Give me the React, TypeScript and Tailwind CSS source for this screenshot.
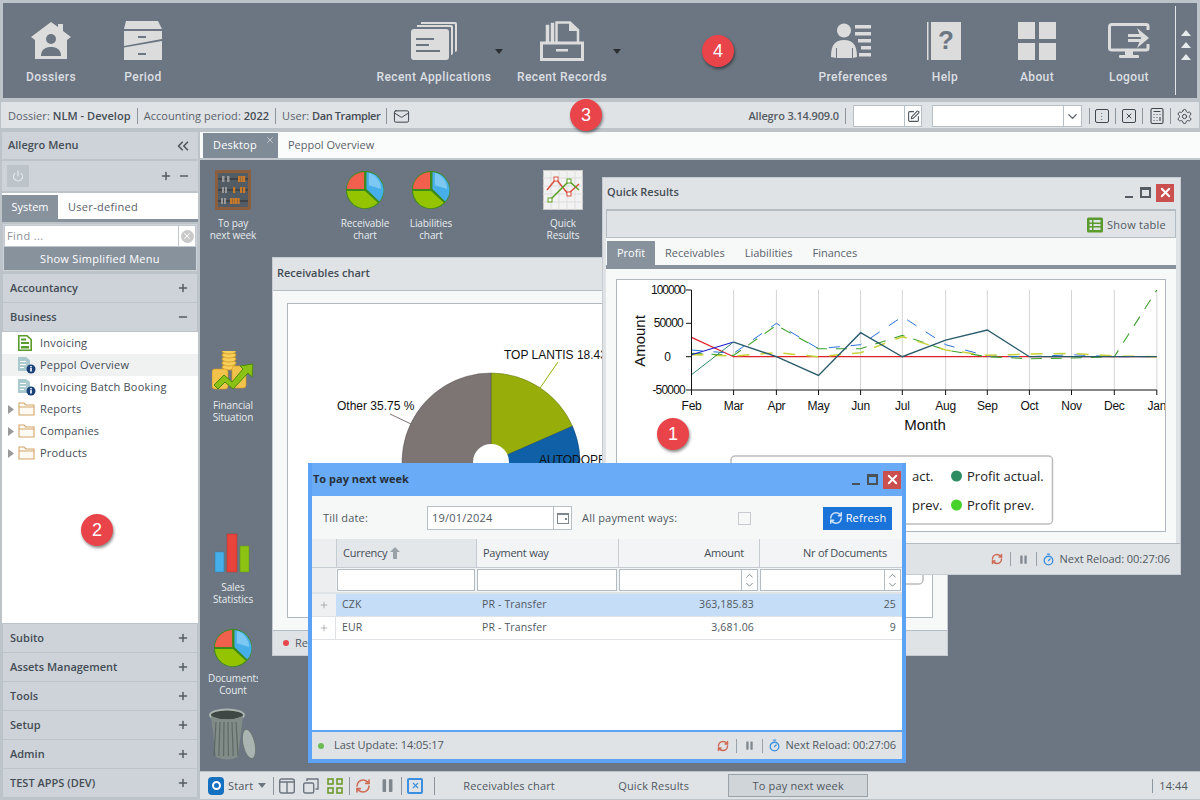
import React from "react";
import { Plus, Minus, ChevronsLeft, Mail, SquarePen, ChevronDown, ChevronUp, Settings, Calculator, X, RefreshCw, Pause, Power, Timer } from "lucide-react";

const G = "#dcdcdc";

function Home() {
  return (
    <svg width="40" height="38" viewBox="0 0 40 38">
      <path d="M0 15 L20 0 L27 5 V2 H32 V9 L40 15 L36 18 V37 H4 V18 Z" fill={G} />
      <circle cx="20" cy="17" r="5" fill="#6b7682" />
      <path d="M10 34 C10 27 15 25 20 25 C25 25 30 27 30 34 Z" fill="#6b7682" />
    </svg>
  );
}
function Cabinet() {
  return (
    <svg width="40" height="40" viewBox="0 0 40 40">
      <path d="M3 0 H35 L39 8 H1 Z" fill={G} />
      <path d="M1 10 H39 V18 L1 25 Z" fill={G} />
      <path d="M1 26.5 L39 20 V39 H1 Z" fill={G} />
      <rect x="15" y="15" width="8" height="2" fill="#6b7682" />
      <rect x="15" y="32" width="8" height="2" fill="#6b7682" />
    </svg>
  );
}
function Apps() {
  return (
    <svg width="46" height="38" viewBox="0 0 46 38">
      <path d="M10 0 H44 Q46 0 46 2 V28 Q46 30 44 30 V3 Q44 2 43 2 H10 Z" fill={G} />
      <path d="M6 3 H40 Q42 3 42 5 V31 Q42 33 40 33 V6 Q40 5 39 5 H6 Z" fill={G} />
      <rect x="0" y="7" width="38" height="31" rx="3" fill={G} />
      <rect x="5" y="16" width="18" height="2" fill="#6b7682" />
      <rect x="5" y="22" width="13" height="2" fill="#6b7682" />
      <rect x="5" y="28" width="24" height="2" fill="#6b7682" />
    </svg>
  );
}
function Records() {
  return (
    <svg width="44" height="40" viewBox="0 0 44 40">
      <path d="M6 22 V4 H9 V22 M11 22 V2 H14 V22" fill={G} stroke={G} strokeWidth="0.5" />
      <path d="M16.5 22 V1.5 H30 L38 9 V22" fill="none" stroke={G} strokeWidth="2.5" />
      <path d="M29 1 V10 H38 Z" fill={G} />
      <path d="M1.5 22 H42.5 V38.5 H1.5 Z" fill="none" stroke={G} strokeWidth="3" />
      <rect x="16" y="28" width="12" height="2.5" fill={G} />
    </svg>
  );
}
function Prefs() {
  return (
    <svg width="44" height="36" viewBox="0 0 44 36">
      <circle cx="13" cy="7.5" r="7" fill={G} />
      <path d="M0 34 C0 22 4 17 13 17 C22 17 26 22 26 34 L22 35 V25 H21 V35 H6 V25 H5 V35 Z" fill={G} />
      <rect x="24" y="2" width="16" height="3.5" fill={G} />
      <rect x="24" y="9" width="16" height="3.5" fill={G} />
      <rect x="27" y="16" width="13" height="3.5" fill={G} />
      <rect x="30" y="23" width="10" height="3.5" fill={G} />
      <rect x="28" y="30" width="12" height="3.5" fill={G} />
    </svg>
  );
}
function Help() {
  return (
    <svg width="36" height="38" viewBox="0 0 36 38">
      <rect x="0" y="0" width="1.5" height="38" fill={G} />
      <rect x="4" y="0" width="30" height="38" fill={G} />
      <text x="19" y="27" textAnchor="middle" fontFamily="Liberation Sans" fontWeight="700" fontSize="26" fill="#6b7682">?</text>
    </svg>
  );
}
function About() {
  return (
    <svg width="38" height="38" viewBox="0 0 38 38">
      <rect x="0" y="0" width="17" height="17" fill={G} />
      <rect x="21" y="0" width="17" height="17" fill={G} />
      <rect x="0" y="21" width="17" height="17" fill={G} />
      <rect x="21" y="21" width="17" height="17" fill={G} />
    </svg>
  );
}
function Logout() {
  return (
    <svg width="42" height="36" viewBox="0 0 42 36">
      <path d="M40 7 V3 Q40 1.5 38 1.5 H4 Q1.5 1.5 1.5 4 V25 Q1.5 27 4 27 H38 Q40 27 40 25 V21" fill="none" stroke={G} strokeWidth="3" />
      <rect x="17" y="27" width="8" height="6" fill={G} />
      <rect x="11" y="32" width="20" height="3" rx="1" fill={G} />
      <rect x="20" y="11" width="14" height="3" fill={G} />
      <rect x="20" y="16" width="14" height="3" fill={G} />
      <path d="M29 5 L41 15 L29 25 L33 15 Z" fill={G} />
    </svg>
  );
}

function PieIcon() {
  return (
    <svg width="40" height="40" viewBox="0 0 42 42">
      <circle cx="21" cy="21" r="20" fill="#3c8a1a" />
      <path d="M20 20 V2 A18.5 18.5 0 0 0 2 20 Z" fill="#f0604c" />
      <path d="M22.5 2 A19 19 0 0 1 36 33 L22.5 20 Z" fill="#46aee8" />
      <path d="M25 3 A18 18 0 0 1 38 20 L25 16 Z" fill="#7cc8f2" />
      <path d="M2 22 H21 L34.5 34.5 A19 19 0 0 1 2 22 Z" fill="#94c400" />
    </svg>
  );
}
function Abacus() {
  const rows = [9, 20, 31];
  return (
    <svg width="36" height="40" viewBox="0 0 36 40">
      <rect x="1.5" y="1.5" width="33" height="37" fill="#525c64" stroke="#8a5f3f" strokeWidth="3" />
      {rows.map((y) => (
        <rect key={y} x="3" y={y - 0.5} width="30" height="1" fill="#2d2d2d" />
      ))}
      {[7, 12].map((x) => <rect key={x} x={x} y="6" width="2.5" height="6" fill="#999" />)}
      {[7, 10].map((x) => <rect key={x} x={x} y="17" width="2" height="6" fill="#999" />)}
      {[23, 25.5, 28].map((x) => <rect key={x} x={x} y="6" width="2.2" height="6" fill="#c87a2a" />)}
      {[18, 25, 28].map((x) => <rect key={x} x={x} y="17" width="2.2" height="6" fill="#c87a2a" />)}
      {[15, 17.5, 20, 22.5].map((x) => <rect key={x} x={x} y="28" width="2.2" height="6" fill="#c87a2a" />)}
      {[6, 9].map((x) => <rect key={x} x={x} y="28" width="2" height="6" fill="#999" />)}
    </svg>
  );
}
function QuickIcon() {
  return (
    <svg width="40" height="40" viewBox="0 0 40 40">
      <rect x="0.5" y="0.5" width="39" height="39" fill="#f2f2f2" stroke="#c8c8c8" />
      <path d="M8 0 V40 M16 0 V40 M24 0 V40 M32 0 V40 M0 8 H40 M0 16 H40 M0 24 H40 M0 32 H40" stroke="#ddd" />
      <path d="M4 20 L13 9 L25 24 L36 14" fill="none" stroke="#d94f3f" strokeWidth="1.5" />
      <path d="M6 31 L26 11 L36 20" fill="none" stroke="#5aa020" strokeWidth="1.5" />
      <rect x="11" y="7" width="4" height="4" fill="#fff" stroke="#d94f3f" />
      <rect x="24" y="22" width="4" height="4" fill="#fff" stroke="#d94f3f" />
      <rect x="24" y="9" width="4" height="4" fill="#fff" stroke="#5aa020" />
      <rect x="5" y="28" width="4" height="4" fill="#fff" stroke="#5aa020" />
    </svg>
  );
}
function Finance() {
  return (
    <svg width="42" height="40" viewBox="0 0 42 40">
      {[0, 4, 8, 12, 16].map((d) => (
        <ellipse key={d} cx="17" cy={16 - d} rx="7" ry="3" fill="#f6cf5a" stroke="#d89a20" strokeWidth="0.8" />
      ))}
      <rect x="0" y="18" width="16" height="20" rx="3" fill="#f3c24b" stroke="#d89a20" strokeWidth="0.6" />
      <rect x="20" y="15" width="14" height="22" rx="3" fill="#f3c24b" stroke="#d89a20" strokeWidth="0.6" />
      <path d="M2 34 L12 24 L20 31 L31 18 L28 15 L41 13 L40 26 L36 22 L21 38 L13 31 L6 38 Z" fill="#8cc214" stroke="#4b8a10" strokeWidth="1" />
    </svg>
  );
}
function Bars() {
  return (
    <svg width="40" height="40" viewBox="0 0 40 40">
      <rect x="2" y="19" width="9" height="20" fill="#46aee8" stroke="#2d7fb0" strokeWidth="0.5" />
      <rect x="14" y="1" width="10" height="38" fill="#e8443c" stroke="#b03028" strokeWidth="0.5" />
      <rect x="27" y="13" width="9" height="26" fill="#8cc214" stroke="#5e9010" strokeWidth="0.5" />
    </svg>
  );
}
function Trash() {
  return (
    <svg width="50" height="54" viewBox="0 0 50 54">
      <ellipse cx="19" cy="7" rx="17" ry="5.5" fill="#3e4744" stroke="#aab4b0" strokeWidth="2" />
      <path d="M3 8 L8 49 Q19 54 30 49 L35 8 Q19 15 3 8 Z" fill="#818c88" />
      {[8, 12, 16, 20, 24, 28].map((x) => (
        <path key={x} d={`M${x} 14 L${x + (x - 18) * 0.2} 48`} stroke="#5e6864" strokeWidth="1.2" />
      ))}
      <ellipse cx="41" cy="36" rx="6" ry="15" transform="rotate(-12 41 36)" fill="#aab4b0" stroke="#6a7470" />
    </svg>
  );
}

function Folder() {
  return (
    <svg width="17" height="14" viewBox="0 0 17 14">
      <path d="M1 13 V1 H6 L8 3 H16 V13 Z M1 5 H16" fill="#fdfaf4" stroke="#d3a468" strokeWidth="1.1" />
    </svg>
  );
}
function DocGreen() {
  return (
    <svg width="14" height="16" viewBox="0 0 14 16">
      <path d="M0.8 0.8 H9 L13.2 4.5 V15.2 H0.8 Z" fill="#fff" stroke="#5b9a2c" strokeWidth="1.6" />
      <rect x="3" y="3.5" width="5" height="2" fill="#5b9a2c" />
      <rect x="3" y="7" width="8" height="2" fill="#5b9a2c" />
      <rect x="3" y="11" width="8" height="2.5" fill="#5b9a2c" />
    </svg>
  );
}
function DocInfo() {
  return (
    <svg width="18" height="18" viewBox="0 0 18 18">
      <path d="M0 1 H8 L12 4 V15 H0 Z" fill="#a9c9cf" />
      <rect x="2" y="5" width="6" height="1" fill="#fff" />
      <rect x="2" y="8" width="6" height="1" fill="#fff" />
      <rect x="2" y="11" width="4" height="1" fill="#fff" />
      <circle cx="13" cy="13" r="4.5" fill="#1a4279" />
      <rect x="12.2" y="12" width="1.6" height="3.5" fill="#fff" />
      <rect x="12.2" y="10" width="1.6" height="1.4" fill="#fff" />
    </svg>
  );
}
function Caret({ color = "#2b2f33" }: { color?: string }) {
  return (
    <svg width="8" height="5" viewBox="0 0 8 5">
      <path d="M0 0 H8 L4 5 Z" fill={color} />
    </svg>
  );
}
function Badge({ n, x, y }: { n: number; x: number; y: number }) {
  return (
    <div
      className="absolute w-8 h-8 rounded-full bg-[#e8444a] text-white text-[18px] flex items-center justify-center shadow-[1px_2px_3px_rgba(0,0,0,0.45)] font-['Liberation_Sans',sans-serif]"
      style={{ left: x - 16, top: y - 16 }}
    >
      {n}
    </div>
  );
}
function RibbonBtn({ label, w = "w-[92px]", children }: { label: string; w?: string; children: React.ReactNode }) {
  return (
    <div className={`${w} h-full flex flex-col items-center text-[#dcdfe2]`}>
      <div className="h-[40px] mt-[18px] flex items-center justify-center">{children}</div>
      <div className="mt-[7px] text-[12px] font-['Roboto',sans-serif] font-medium tracking-[0.4px] whitespace-nowrap">{label}</div>
    </div>
  );
}
function Sep({ h = "h-[16px]" }: { h?: string }) {
  return <div className={`${h} w-px bg-[#8d969e]`} />;
}
function SideHead({ label, minus = false }: { label: string; minus?: boolean }) {
  return (
    <div className="mx-px h-[28px] mb-px bg-[#cdd3d8] flex items-center justify-between pl-[7px] pr-[8px] text-[11px] font-semibold text-[#444c55]">
      <span>{label}</span>
      {minus ? <Minus size={12} strokeWidth={3} color="#545c64" /> : <Plus size={12} strokeWidth={3} color="#545c64" />}
    </div>
  );
}
function MenuItem({ icon, label, active = false, arrow = false }: { icon: React.ReactNode; label: string; active?: boolean; arrow?: boolean }) {
  return (
    <div className={`h-[22px] flex items-center text-[11px] tracking-[0.2px] text-[#444c55] ${active ? "bg-[#f0f2f2]" : ""}`}>
      <div className="w-[6px]" />
      <div className="w-[10px]">
        {arrow && (
          <svg width="6" height="9" viewBox="0 0 6 9"><path d="M0 0 L6 4.5 L0 9 Z" fill="#9a9a9a" /></svg>
        )}
      </div>
      <div className="w-[22px] flex justify-start">{icon}</div>
      <span>{label}</span>
    </div>
  );
}
function WinControls({ dark = false }: { dark?: boolean }) {
  const c = dark ? "#4a5058" : "#555c63";
  return (
    <div className="flex items-center gap-[4px]">
      <div className="w-[9px] h-[10px] flex items-end mr-[2px]">
        <div className="w-[8px] h-[2px]" style={{ background: c }} />
      </div>
      <div className="w-[11px] h-[11px] border-2 border-t-[3px]" style={{ borderColor: c }} />
      <div className="w-[18px] h-[18px] bg-[#c9504f] flex items-center justify-center ml-[1px]">
        <X size={15} strokeWidth={3} color="#fff" />
      </div>
    </div>
  );
}
function FooterRight() {
  return (
    <div className="flex items-center text-[11px] text-[#50585f] tracking-[-0.05px]">
      <RefreshCw size={12} strokeWidth={3} color="#cf6a55" />
      <div className="w-px h-[14px] bg-[#9aa2a9] ml-[7px] mr-[7px]" />
      <Pause size={11} strokeWidth={0} fill="#7f878e" />
      <div className="w-px h-[14px] bg-[#9aa2a9] ml-[7px] mr-[5px]" />
      <Timer size={13} strokeWidth={2.4} color="#3a8fe0" />
      <span className="ml-[5px]">Next Reload: 00:27:06</span>
    </div>
  );
}
function DeskIcon({ x, y, w = 56, gap = "mt-[6px]", label, children }: { x: number; y: number; w?: number; gap?: string; label: string[]; children: React.ReactNode }) {
  return (
    <div className="absolute flex flex-col items-center" style={{ left: x - w / 2, top: y, width: w }}>
      <div className="h-[44px] flex items-center justify-center">{children}</div>
      <div className={`${gap} text-[10px] leading-[12px] text-[#e8ebee] text-center overflow-hidden w-full whitespace-nowrap tracking-[-0.1px]`}>
        {label.map((l) => <div key={l}>{l}</div>)}
      </div>
    </div>
  );
}

const xs = [691.5, 733.6, 776.4, 818.5, 860.6, 902.3, 945.6, 987.3, 1029.4, 1071.5, 1114.3, 1156.8];
const months = ["Feb", "Mar", "Apr", "May", "Jun", "Jul", "Aug", "Sep", "Oct", "Nov", "Dec", "Jan"];
const yy = (v: number) => 356.7 - (v * 66.7) / 100000;
const line = (vals: number[]) => vals.map((v, i) => `${xs[i]},${yy(v)}`).join(" ");

function QuickChart() {
  return (
    <svg className="absolute inset-0" width="548" height="251" viewBox="617 280 548 251" fontFamily="'Liberation Sans', sans-serif">
      {xs.slice(1).map((x) => <line key={x} x1={x} y1="290" x2={x} y2="390" stroke="#d4d4d4" />)}
      <polyline points={line([29000, 0, 0, 0, 0, 0, 0, 0, 0, 0, 0, 0])} fill="none" stroke="#e01f26" strokeWidth="1.2" />
      <polyline points={line([10000, 5000, 50000, 12000, 18000, 60000, 18000, 1000, 0, 3000, 0, 0])} fill="none" stroke="#2a72d8" strokeWidth="1" strokeDasharray="11 11" />
      <polyline points={line([5000, 2000, 47000, 12000, 12000, 32000, 10000, 0, -3000, -2000, 0, 100000])} fill="none" stroke="#3da12c" strokeWidth="1.1" strokeDasharray="11 9" />
      <polyline points={line([3000, 1000, 6000, 0, 6000, 30000, 10000, 2000, 4000, 5000, 1000, 0])} fill="none" stroke="#c8d23a" strokeWidth="1.5" strokeDasharray="12 11" />
      <polyline points={line([3000, 22000])} fill="none" stroke="#1e22d0" strokeWidth="1.1" />
      <polyline points={line([-27000, 22000])} fill="none" stroke="#2f8a62" strokeWidth="1" />
      <polyline points={line([22000, 22000, 0, -28000, 36000, 0, 25000, 40000, 0, 0, 0, 0]).split(" ").slice(1).join(" ")} fill="none" stroke="#295a6c" strokeWidth="1.3" />
      <line x1="691.5" y1="290" x2="691.5" y2="390" stroke="#111" />
      <line x1="691.5" y1="390" x2="1156.8" y2="390" stroke="#111" />
      {[290, 323.3, 356.7, 390].map((y) => <line key={y} x1="686" y1={y} x2="691.5" y2={y} stroke="#111" />)}
      {xs.map((x) => <line key={x} x1={x} y1="390" x2={x} y2="395" stroke="#111" />)}
      <text x="685" y="294" textAnchor="end" fontSize="12" letterSpacing="-1" fill="#111">100000</text>
      <text x="683" y="327" textAnchor="end" fontSize="12" letterSpacing="-0.8" fill="#111">50000</text>
      <text x="671" y="361" textAnchor="end" fontSize="12" fill="#111">0</text>
      <text x="685" y="394" textAnchor="end" fontSize="12" letterSpacing="-0.8" fill="#111">-50000</text>
      {xs.map((x, i) => <text key={x} x={x} y="410" textAnchor="middle" fontSize="12" letterSpacing="-0.3" fill="#111">{months[i]}</text>)}
      <text x="925" y="430" textAnchor="middle" fontSize="15" fill="#111">Month</text>
      <text transform="translate(645 341) rotate(-90)" textAnchor="middle" fontSize="15" fill="#111">Amount</text>
      <rect x="731" y="456" width="321.5" height="68" rx="4" fill="#fff" stroke="#bcbcbc" strokeWidth="1.5" />
      <g fontFamily="'Open Sans', sans-serif" fontSize="13" fill="#222">
        <text x="912" y="481">act.</text>
        <text x="912" y="510">prev.</text>
        <circle cx="956.5" cy="476" r="5.5" fill="#2e8b62" />
        <circle cx="956.5" cy="505" r="5.5" fill="#46d22a" />
        <text x="967" y="481">Profit actual.</text>
        <text x="967" y="510">Profit prev.</text>
      </g>
    </svg>
  );
}

function slice(cx: number, cy: number, r: number, a0: number, a1: number) {
  const p = (a: number) => [cx + r * Math.sin((a * Math.PI) / 180), cy - r * Math.cos((a * Math.PI) / 180)];
  const [x0, y0] = p(a0);
  const [x1, y1] = p(a1);
  return `M${cx} ${cy} L${x0} ${y0} A${r} ${r} 0 ${a1 - a0 > 180 ? 1 : 0} 1 ${x1} ${y1} Z`;
}
function PieChart() {
  return (
    <svg className="absolute inset-0" width="643" height="315" viewBox="288 303 643 315" fontFamily="'Liberation Sans', sans-serif" fontSize="12" fill="#111">
      <path d={slice(491, 461, 89, 0, 66.3)} fill="#96ad0a" stroke="#5a6a10" strokeWidth="0.5" />
      <path d={slice(491, 461, 89, 66.3, 130)} fill="#1060a8" stroke="#0a3f70" strokeWidth="0.5" />
      <path d={slice(491, 461, 89, 231.3, 360)} fill="#7d7474" stroke="#5a5454" strokeWidth="0.5" />
      <circle cx="491" cy="461" r="18" fill="#fff" />
      <line x1="558" y1="361" x2="540" y2="387" stroke="#96ad0a" />
      <line x1="390" y1="413" x2="411" y2="423" stroke="#7d7474" />
      <text x="504" y="358">TOP LANTIS 18.43 %</text>
      <text x="337" y="409">Other 35.75 %</text>
      <text x="539" y="463">AUTODOPRAVA</text>
      <rect x="700" y="420" width="223" height="163" rx="4" fill="#fff" stroke="#bcbcbc" strokeWidth="1.5" />
    </svg>
  );
}

function GridCell({ className = "", children }: { className?: string; children?: React.ReactNode }) {
  return <div className={`h-full flex items-center ${className}`}>{children}</div>;
}
function NumFilter() {
  return (
    <div className="h-[22px] bg-white border border-[#b3bbc3] flex items-stretch justify-end">
      <div className="w-[16px] border-l border-[#b3bbc3] flex flex-col items-center justify-center -space-y-[3px]">
        <ChevronUp size={13} strokeWidth={2} color="#7f878e" />
        <ChevronDown size={13} strokeWidth={2} color="#7f878e" />
      </div>
    </div>
  );
}

export default function App() {
  return (
    <div className="relative w-[1200px] h-[800px] overflow-hidden bg-[#bcc4ca] font-['Open_Sans',sans-serif] flex flex-col">
      {/* Ribbon */}
      <div className="mx-[3px] mt-[3px] h-[95px] bg-[#6b7682] flex items-stretch pl-[2px]">
        <RibbonBtn label="Dossiers"><Home /></RibbonBtn>
        <RibbonBtn label="Period"><Cabinet /></RibbonBtn>
        <div className="w-[181px]" />
        <div className="relative flex">
          <RibbonBtn label="Recent Applications" w="w-[128px]"><Apps /></RibbonBtn>
          <div className="absolute left-[125px] top-[46px]"><Caret /></div>
        </div>
        <div className="relative flex">
          <RibbonBtn label="Recent Records" w="w-[128px]"><Records /></RibbonBtn>
          <div className="absolute left-[115px] top-[46px]"><Caret /></div>
        </div>
        <div className="flex-1" />
        <RibbonBtn label="Preferences"><Prefs /></RibbonBtn>
        <RibbonBtn label="Help"><Help /></RibbonBtn>
        <RibbonBtn label="About"><About /></RibbonBtn>
        <RibbonBtn label="Logout"><Logout /></RibbonBtn>
        <div className="w-[22px] my-[3px] border-l border-[#e4e7ea] flex flex-col items-center justify-center gap-[6px] pb-[12px] pr-[2px]">
          {[0, 1, 2].map((i) => (
            <svg key={i} width="10" height="6" viewBox="0 0 10 6"><path d="M0 6 L5 0 L10 6 Z" fill="#e8eaec" /></svg>
          ))}
        </div>
      </div>

      {/* Status bar */}
      <div className="mt-[4px] h-[26px] mx-[1px] bg-[#dfe3e6] flex items-center pl-[7px] pr-[6px] pt-[2px] text-[11px] text-[#5a6169] tracking-[0.05px]">
        <span>Dossier: <b className="font-semibold text-[#454c54]">NLM - Develop</b></span>
        <div className="mx-[6px]"><Sep /></div>
        <span>Accounting period: <b className="font-semibold text-[#454c54]">2022</b></span>
        <div className="mx-[6px]"><Sep /></div>
        <span>User: <b className="font-semibold text-[#454c54] tracking-[-0.4px]">Dan Trampler</b></span>
        <div className="mx-[6px]"><Sep /></div>
        <Mail size={17} strokeWidth={1.4} color="#3d444b" />
        <div className="flex-1" />
        <span className="font-semibold text-[#555b62] tracking-[-0.15px]">Allegro 3.14.909.0</span>
        <div className="ml-[6px] mr-[7px]"><Sep /></div>
        <div className="w-[69px] h-[22px] bg-white border border-[#b6bec6] flex justify-end">
          <div className="w-[17px] border-l border-[#b6bec6] flex items-center justify-center">
            <SquarePen size={13} strokeWidth={2} color="#4d555c" />
          </div>
        </div>
        <div className="ml-[10px] w-[150px] h-[22px] bg-white border border-[#b6bec6] flex justify-end">
          <div className="w-[18px] border-l border-[#b6bec6] flex items-center justify-center">
            <ChevronDown size={15} strokeWidth={2.2} color="#5a6169" />
          </div>
        </div>
        <div className="ml-[7px] mr-[5px]"><Sep /></div>
        <div className="w-[14px] h-[14px] border border-[#40484f] rounded-[2px] flex items-center justify-center text-[9px] leading-none">⋮</div>
        <div className="ml-[6px] mr-[6px]"><Sep /></div>
        <div className="w-[14px] h-[14px] border border-[#40484f] rounded-[2px] flex items-center justify-center"><X size={8} strokeWidth={3} color="#40484f" /></div>
        <div className="ml-[6px] mr-[5px]"><Sep /></div>
        <Calculator size={18} strokeWidth={1.5} color="#40484f" />
        <div className="ml-[4px] mr-[5px]"><Sep /></div>
        <Settings size={17} strokeWidth={1.4} color="#40484f" />
      </div>

      {/* Main */}
      <div className="mt-[4px] flex-1 flex min-h-0">
        {/* Sidebar */}
        <div className="ml-[2px] w-[196px] flex flex-col">
          <div className="h-[27px] bg-[#cdd3d8] flex items-center justify-between pl-[6px] pr-[6px] text-[11px] font-semibold text-[#444c55]">
            <span>Allegro Menu</span>
            <ChevronsLeft size={18} strokeWidth={2.2} color="#4f565e" />
          </div>
          <div className="mt-[2px] h-[30px] bg-[#cdd3d8] flex items-center justify-between pl-[5px] pr-[8px]">
            <div className="w-[22px] h-[22px] bg-[#bcc4ca] flex items-center justify-center">
              <Power size={12} strokeWidth={2.4} color="#e6e9ec" />
            </div>
            <div className="flex gap-[6px]">
              <Plus size={12} strokeWidth={3} color="#545c64" />
              <Minus size={12} strokeWidth={3} color="#545c64" />
            </div>
          </div>
          <div className="mt-[2px] h-[26px] pt-[2px] bg-white flex items-stretch text-[11px] tracking-[0.3px]">
            <div className="w-[56px] bg-[#87929d] text-white flex items-center justify-center tracking-[0px]">System</div>
            <div className="flex items-center pl-[10px] text-[#5a6169]">User-defined</div>
          </div>
          <div className="h-[3px] bg-[#87929d]" />
          <div className="mx-px mt-[2px] border border-[#cdd3d8] bg-[#eef0f1]">
            <div className="flex h-[22px] bg-white items-center border border-[#c0c7cd]">
              <span className="flex-1 pl-[2px] text-[11px] text-[#8a9198] tracking-[0.4px]">Find ...</span>
              <div className="w-[17px] h-full border-l border-[#c0c7cd] flex items-center justify-center bg-white">
                <div className="w-[13px] h-[13px] rounded-full bg-[#c9c9c9] flex items-center justify-center">
                  <X size={10} strokeWidth={2.4} color="#fff" />
                </div>
              </div>
            </div>
            <div className="h-[23px] pt-px bg-[#87929d] text-white text-[11px] flex items-center justify-center tracking-[0.3px]">Show Simplified Menu</div>
          </div>
          <div className="mt-[3px]" />
          <SideHead label="Accountancy" />
          <SideHead label="Business" minus />
          <div className="flex-1 bg-white">
            <MenuItem icon={<DocGreen />} label="Invoicing" />
            <MenuItem icon={<DocInfo />} label="Peppol Overview" active />
            <MenuItem icon={<DocInfo />} label="Invoicing Batch Booking" />
            <MenuItem arrow icon={<Folder />} label="Reports" />
            <MenuItem arrow icon={<Folder />} label="Companies" />
            <MenuItem arrow icon={<Folder />} label="Products" />
          </div>
          <div className="mt-px" />
          <SideHead label="Subito" />
          <SideHead label="Assets Management" />
          <SideHead label="Tools" />
          <SideHead label="Setup" />
          <SideHead label="Admin" />
          <SideHead label="TEST APPS (DEV)" />
          <div className="h-[2px]" />
        </div>

        {/* Content */}
        <div className="ml-[2px] flex-1 flex flex-col min-w-0">
          <div className="h-[26px] bg-[#fafcfc] flex items-stretch pl-[3px] pt-px text-[11px]">
            <div className="relative w-[75px] bg-[#7f8b97] text-white flex items-center pl-[10px] tracking-[0.2px]">
              Desktop
              <X size={10} strokeWidth={1.5} color="#e6e9ec" className="absolute right-[3px] top-[2px]" />
            </div>
            <div className="flex items-center pl-[10px] text-[#5a6169]">Peppol Overview</div>
          </div>
          <div className="h-[2px] bg-[#c2c9ce]" />
          <div className="relative flex-1 bg-[#6b7682]">
            <DeskIcon x={33} y={8} gap="mt-[5px]" label={["To pay", "next week"]}><Abacus /></DeskIcon>
            <DeskIcon x={165} y={8} w={50} gap="mt-[5px]" label={["Receivable", "chart"]}><PieIcon /></DeskIcon>
            <DeskIcon x={231} y={8} w={50} gap="mt-[5px]" label={["Liabilities", "chart"]}><PieIcon /></DeskIcon>
            <DeskIcon x={363} y={8} gap="mt-[5px]" label={["Quick", "Results"]}><QuickIcon /></DeskIcon>
            <DeskIcon x={33} y={189} label={["Financial", "Situation"]}><Finance /></DeskIcon>
            <DeskIcon x={33} y={371} label={["Sales", "Statistics"]}><Bars /></DeskIcon>
            <DeskIcon x={33} y={466} w={50} gap="mt-[2px]" label={["Documents", "Count"]}><PieIcon /></DeskIcon>
            <div className="absolute left-[8px] top-[548px]"><Trash /></div>

            {/* Receivables chart window */}
            <div className="absolute left-[72px] top-[97px] w-[676px] h-[399px] bg-[#dfe3e6] border border-[#c6ccd2] flex flex-col">
              <div className="h-[32px] pb-[1px] flex items-center pl-[4px] text-[11px] font-semibold text-[#444c55]">Receivables chart</div>
              <div className="flex-1 bg-[#f7f9f9] border-t border-b border-[#b4bcc4] px-[14px] pt-[12px] pb-[12px]">
                <div className="relative h-full bg-white border border-[#b0b8bf]"><PieChart /></div>
              </div>
              <div className="h-[24px] flex items-center pl-[10px] text-[11px] text-[#50585f]">
                <div className="w-[6px] h-[6px] rounded-full bg-[#e5474d] mr-[6px]" />
                Re
              </div>
            </div>

            {/* Quick Results window */}
            <div className="absolute left-[402px] top-[17px] w-[579px] h-[398px] bg-[#dfe3e6] border border-[#c6ccd2] flex flex-col">
              <div className="h-[31px] pb-[2px] flex items-center justify-between pl-[4px] pr-[6px] text-[11px] font-semibold text-[#444c55]">
                Quick Results
                <WinControls />
              </div>
              <div className="ml-[3px] mr-[4px] h-[29px] pt-[2px] border border-[#b4bcc4] border-t-2 flex items-center justify-end pr-[9px] text-[11px] text-[#50585f] tracking-[0.25px]">
                <svg className="mr-[4px]" width="16" height="16" viewBox="0 0 16 16">
                  <rect x="0" y="0.5" width="16" height="15" rx="1.5" fill="#5b9a2c" />
                  <path d="M2.5 3 H5 V5.5 H2.5 Z M2.5 7 H5 V9 H2.5 Z M2.5 10.5 H5 V13 H2.5 Z M6.5 3 H13.5 V5.5 H6.5 Z M6.5 7 H13.5 V9 H6.5 Z M6.5 10.5 H13.5 V13 H6.5 Z" fill="#dfe3e6" />
                </svg>
                Show table
              </div>
              <div className="ml-[3px] mr-[4px] flex-1 bg-[#f7f9f9] flex flex-col pt-[3px]">
                <div className="h-[28px] border-b-[4px] border-[#87929d] flex items-stretch text-[11px] text-[#5a6169]">
                  <div className="ml-px w-[48px] pt-px bg-[#87929d] text-white flex items-center justify-center">Profit</div>
                  <div className="ml-[10px] pt-px flex items-center">Receivables</div>
                  <div className="ml-[20px] pt-px flex items-center">Liabilities</div>
                  <div className="ml-[20px] pt-px flex items-center">Finances</div>
                </div>
                <div className="flex-1 px-[10px] pt-[10px] pb-[11px]">
                  <div className="relative h-full bg-white border border-[#b0b8bf]"><QuickChart /></div>
                </div>
              </div>
              <div className="h-[31px] flex items-center justify-end pr-[10px] border-t border-[#b4bcc4]">
                <FooterRight />
              </div>
            </div>

            {/* To pay next week window */}
            <div className="absolute left-[108px] top-[303px] w-[598px] h-[300px] bg-[#6aabf7] border-x-[4px] border-b-[4px] border-[#5da3f5] flex flex-col">
              <div className="h-[33px] bg-[#6aabf7] flex items-center justify-between pl-px pr-[1px] text-[11px] font-bold text-[#26303a]">
                To pay next week
                <WinControls dark />
              </div>
              <div className="h-[43px] pt-px bg-[#f6f8f8] flex items-center pl-[11px] text-[11px] text-[#50585f] tracking-[0.2px]">
                <span className="w-[104px]">Till date:</span>
                <div className="w-[145px] h-[24px] bg-white border border-[#b6bec6] flex items-center justify-between pl-[4px]">
                  19/01/2024
                  <div className="w-[18px] h-full border-l border-[#b6bec6] flex items-center justify-center">
                    <div className="w-[12px] h-[11px] border border-[#7f878e] border-t-2 flex items-center justify-end pr-px"><div className="w-[2px] h-[2px] bg-[#7f878e]" /></div>
                  </div>
                </div>
                <span className="ml-[10px] w-[156px]">All payment ways:</span>
                <div className="w-[13px] h-[13px] border border-[#c6ccd2] bg-[#f6f8f8]" />
                <div className="ml-[72px] w-[69px] h-[23px] bg-[#1a73d8] text-white flex items-center justify-center gap-[3px]">
                  <RefreshCw size={14} strokeWidth={2.6} color="#cfe2f7" />
                  <span>Refresh</span>
                </div>
              </div>
              <div className="grid grid-cols-[24px_140px_142px_141px_143px] h-[28px] bg-[#f2f4f5] text-[11px] text-[#444c55] tracking-[-0.25px]">
                <GridCell className="bg-[#eceef0]" />
                <GridCell className="pl-[6px] bg-[#e4e7ea] border-l border-[#c6ccd2] gap-[3px]">
                  Currency
                  <svg width="10" height="12" viewBox="0 0 10 12"><path d="M5 0 L10 5 H7 V12 H3 V5 H0 Z" fill="#9aa2a9" /></svg>
                </GridCell>
                <GridCell className="pl-[6px] border-l border-[#c6ccd2]">Payment way</GridCell>
                <GridCell className="justify-end pr-[15px] border-l border-[#c6ccd2]">Amount</GridCell>
                <GridCell className="justify-end pr-[15px] border-l border-[#c6ccd2]">Nr of Documents</GridCell>
              </div>
              <div className="grid grid-cols-[24px_140px_142px_141px_143px] h-[25px] bg-[#f2f4f5] border-t border-[#c6ccd2] items-center">
                <div className="h-full bg-[#eceef0]" />
                <div className="h-[22px] mx-px bg-white border border-[#b3bbc3]" />
                <div className="h-[22px] mx-px bg-white border border-[#b3bbc3]" />
                <div className="mx-px"><NumFilter /></div>
                <div className="mx-px"><NumFilter /></div>
              </div>
              <div className="h-[2px] bg-[#dfe3e6]" />
              <div className="flex-1 bg-white flex flex-col text-[10.5px] text-[#50585f] tracking-[0.15px]">
                <div className="grid grid-cols-[24px_140px_142px_141px_143px] h-[23px] bg-[#c6ddf8] items-center border-b border-[#dfe3e6]">
                  <GridCell className="justify-center bg-[#eef0f1]"><Plus size={10} strokeWidth={1.2} color="#777" /></GridCell>
                  <GridCell className="pl-[6px]">CZK</GridCell>
                  <GridCell className="pl-[6px]">PR - Transfer</GridCell>
                  <GridCell className="justify-end pr-[5px]">363,185.83</GridCell>
                  <GridCell className="justify-end pr-[6px]">25</GridCell>
                </div>
                <div className="grid grid-cols-[24px_140px_142px_141px_143px] h-[23px] items-center border-b border-[#dfe3e6]">
                  <GridCell className="justify-center border-r border-[#dfe3e6]"><Plus size={10} strokeWidth={1.2} color="#777" /></GridCell>
                  <GridCell className="pl-[6px]">EUR</GridCell>
                  <GridCell className="pl-[6px]">PR - Transfer</GridCell>
                  <GridCell className="justify-end pr-[5px]">3,681.06</GridCell>
                  <GridCell className="justify-end pr-[6px]">9</GridCell>
                </div>
                <div className="flex-1" />
                <div className="h-[2px] bg-[#5da3f5]" />
                <div className="h-[27px] bg-[#dfe3e6] flex items-center justify-between pl-[6px] pr-[6px] text-[11px]">
                  <div className="flex items-center tracking-[-0.05px]">
                    <div className="w-[6px] h-[6px] rounded-full bg-[#6dbb55] mr-[10px]" />
                    Last Update: 14:05:17
                  </div>
                  <FooterRight />
                </div>
              </div>
            </div>
          </div>
          <div className="h-[1px] bg-[#bcc4ca]" />
          {/* Taskbar */}
          <div className="h-[27px] mb-[1px] bg-[#dfe3e6] flex items-center pl-[8px] pr-[12px] text-[11px] text-[#50585f] tracking-[0.15px]">
            <div className="w-[16px] h-[18px] rounded-[4px] bg-[#1570c0] flex items-center justify-center">
              <div className="w-[9px] h-[9px] rounded-full border-2 border-white" />
            </div>
            <span className="ml-[4px] pt-px">Start</span>
            <div className="ml-[5px]"><Caret color="#6b7682" /></div>
            <div className="ml-[7px]"><Sep h="h-[18px]" /></div>
            <svg className="ml-[5px]" width="16" height="16" viewBox="0 0 16 16"><rect x="0.7" y="1" width="14.6" height="14" rx="2" fill="none" stroke="#6d7680" strokeWidth="1.4" /><path d="M0.7 4 H15.3 M8 4 V15" stroke="#6d7680" strokeWidth="1.4" /></svg>
            <svg className="ml-[8px]" width="16" height="16" viewBox="0 0 16 16"><rect x="0.7" y="5" width="10" height="10" rx="1.5" fill="none" stroke="#6d7680" strokeWidth="1.4" /><path d="M4 3 V1 H15 V11 H12.5" fill="none" stroke="#6d7680" strokeWidth="1.4" /></svg>
            <svg className="ml-[8px]" width="16" height="16" viewBox="0 0 16 16"><g fill="none" stroke="#6e9a2c" strokeWidth="1.6"><rect x="1" y="1" width="5" height="5" /><rect x="10" y="1" width="5" height="5" /><rect x="1" y="10" width="5" height="5" /><rect x="10" y="10" width="5" height="5" /></g></svg>
            <div className="ml-[6px]"><Sep h="h-[18px]" /></div>
            <RefreshCw className="ml-[5px]" size={16} strokeWidth={2.4} color="#cf6a55" />
            <Pause className="ml-[8px]" size={17} strokeWidth={0} fill="#7f878e" />
            <div className="ml-[5px]"><Sep h="h-[18px]" /></div>
            <div className="ml-[5px] w-[16px] h-[16px] border-2 border-[#3a8fe0] rounded-[2px] flex items-center justify-center"><X size={9} strokeWidth={3} color="#3a8fe0" /></div>
            <div className="ml-[11px]"><Sep h="h-[18px]" /></div>
            <span className="ml-[28px] w-[155px] pt-px">Receivables chart</span>
            <span className="w-[110px] pt-px">Quick Results</span>
            <div className="w-[140px] h-[23px] pt-px bg-[#d0d5d9] border border-[#9aa2a9] flex items-center justify-center">To pay next week</div>
            <div className="flex-1" />
            <Sep h="h-[14px]" />
            <span className="ml-[6px] text-[11px] pt-px">14:44</span>
          </div>
        </div>
      </div>

      <Badge n={4} x={718} y={51} />
      <Badge n={3} x={586} y={115} />
      <Badge n={2} x={97} y={530} />
      <Badge n={1} x={673} y={434} />
    </div>
  );
}
